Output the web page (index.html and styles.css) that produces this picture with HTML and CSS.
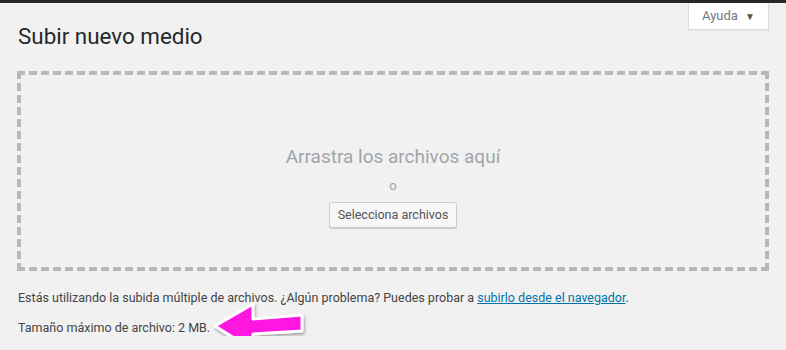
FILE: index.html
```html
<!DOCTYPE html>
<html lang="es">
<head>
    <meta charset="UTF-8">
    <title>Subir nuevo medio</title>
    <link rel="stylesheet" href="styles.css">
</head>
<body>
    <div class="admin-bar"></div>
    <div class="wrap">
        <div class="screen-meta-links">
            <button class="help-tab">Ayuda <span class="caret">▼</span></button>
        </div>
        <h1 class="page-title">Subir nuevo medio</h1>

        <div class="drag-drop-area">
            <div class="drag-drop-inside">
                <p class="drag-drop-info">Arrastra los archivos aquí</p>
                <p class="drag-drop-or">o</p>
                <button class="button">Selecciona archivos</button>
            </div>
        </div>

        <p class="upload-flash-bypass">Estás utilizando la subida múltiple de archivos. ¿Algún problema? Puedes probar a <a href="#">subirlo desde el navegador</a>.</p>
        <div class="max-upload-size">
            <p>Tamaño máximo de archivo: 2 MB.</p>
            <!-- flecha de aviso sobre el texto -->
            <svg class="pointer-arrow" width="110" height="60">
                <defs>
                    <filter id="arrow-shadow" x="-20%" y="-20%" width="140%" height="160%">
                        <feDropShadow dx="1" dy="2" stdDeviation="1.5" flood-color="#000" flood-opacity="0.35"/>
                    </filter>
                </defs>
                <path d="M4 22 L42 0 L42 15 L91 11 L91 27 L42 30 L42 46 Z" fill="#ff14e1" stroke="#fff" stroke-width="3" stroke-linejoin="round" filter="url(#arrow-shadow)"/>
            </svg>
        </div>
    </div>
</body>
</html>
```

FILE: styles.css
```css
* {
    margin: 0;
    padding: 0;
    box-sizing: border-box;
}

body {
    background: #f1f1f1;
    color: #444;
    font-family: Roboto, "Noto Sans", sans-serif;
    font-size: 12.5px;
    line-height: 1.4;
}

.admin-bar {
    height: 3px;
    background: #23282d;
}

.wrap {
    padding: 0 17px 0 18px;
}

.screen-meta-links {
    float: right;
}

.help-tab {
    display: block;
    width: 81px;
    height: 27px;
    padding: 0 0 2px 0;
    background: #fff;
    border: 1px solid #dcdcdc;
    border-top: none;
    box-shadow: 0 1px 1px rgba(0,0,0,0.04);
    color: #72777c;
    font-family: inherit;
    font-size: 13px;
    cursor: pointer;
}

.help-tab .caret {
    font-size: 10px;
    margin-left: 4px;
    color: #555;
}

.page-title {
    padding-top: 19px;
    font-size: 22.4px;
    font-weight: 400;
    line-height: 29px;
    color: #23282d;
}

.drag-drop-area {
    margin: 20px 0 0 -1px;
    height: 200px;
    border: 4px dashed #b4b9be;
    text-align: center;
}

.drag-drop-inside {
    margin-top: 70px;
}

.drag-drop-info {
    font-size: 19px;
    line-height: 24px;
    color: #a0a5aa;
}

.drag-drop-or {
    margin-top: 8px;
    font-size: 13px;
    color: #a0a5aa;
}

.button {
    margin-top: 7px;
    height: 26px;
    padding: 0 8px 1px;
    background: #f7f7f7;
    border: 1px solid #ccc;
    border-radius: 3px;
    box-shadow: 0 1px 0 #ccc;
    color: #555;
    font-family: inherit;
    font-size: 12.5px;
    cursor: pointer;
}

.upload-flash-bypass {
    margin-top: 18px;
}

.upload-flash-bypass a {
    color: #0073aa;
}

.max-upload-size {
    position: relative;
    margin-top: 12px;
}

.pointer-arrow {
    position: absolute;
    left: 193px;
    top: -15px;
    overflow: visible;
}
```
